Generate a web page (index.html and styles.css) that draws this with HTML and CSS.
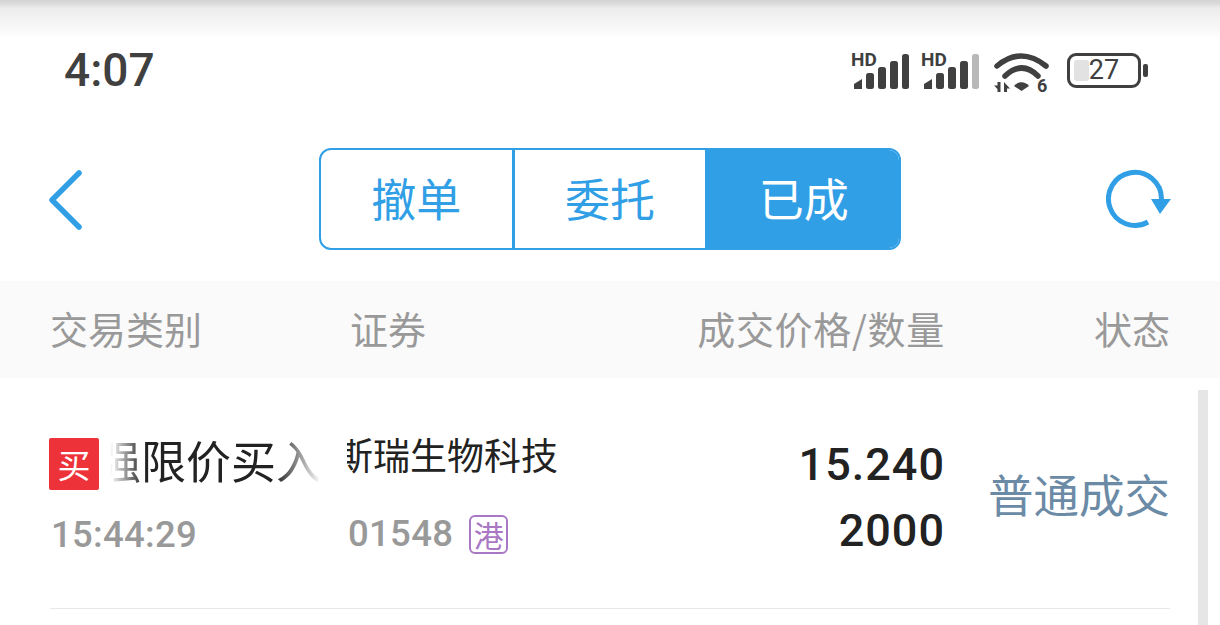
FILE: index.html
```html
<!DOCTYPE html>
<html lang="zh-CN">
<head>
  <meta charset="UTF-8">
  <title>已成</title>
  <link rel="stylesheet" href="styles.css">
</head>
<body>
  <div class="page">
    <div class="top_shade"></div>

    <!-- status bar -->
    <div class="status_bar">
      <span class="clock">4:07</span>
      <div class="status_icons">
        <svg class="icon_signal" width="60" height="40" viewBox="0 0 60 40">
          <text x="0" y="14" class="hd_text">HD</text>
          <path d="M3 37v-5l8-5v10z" fill="#404040"/>
          <rect x="15" y="21" width="8" height="16" rx="2.500" fill="#404040"/>
          <rect x="27" y="15" width="8" height="22" rx="2.500" fill="#404040"/>
          <rect x="39" y="9" width="8" height="28" rx="2.500" fill="#404040"/>
          <rect x="51" y="2" width="7" height="35" rx="2.500" fill="#404040"/>
        </svg>
        <svg class="icon_signal" width="60" height="40" viewBox="0 0 60 40">
          <text x="0" y="14" class="hd_text">HD</text>
          <path d="M3 37v-5l8-5v10z" fill="#404040"/>
          <rect x="15" y="21" width="8" height="16" rx="2.500" fill="#404040"/>
          <rect x="27" y="15" width="8" height="22" rx="2.500" fill="#404040"/>
          <rect x="39" y="9" width="8" height="28" rx="2.500" fill="#404040"/>
          <rect x="51" y="2" width="7" height="35" rx="2.500" fill="#b8b8b8"/>
        </svg>
        <svg class="icon_wifi" width="56" height="42" viewBox="0 0 56 42">
          <path d="M3 14Q27 -6 52 14" fill="none" stroke="#404040" stroke-width="5.500" stroke-linecap="round"/>
          <path d="M11 24Q28 8 44 24" fill="none" stroke="#404040" stroke-width="5.500" stroke-linecap="round"/>
          <path d="M20 34C24 29 31 29 35 34L27.500 39z" fill="#404040"/>
          <path d="M3.500 30h3v10h-3v-3L0 33.500h3.500zM10 30l6 6.500h-3v3.500h-3z" fill="#404040"/>
          <text x="43" y="40" class="wifi_six">6</text>
        </svg>
        <div class="battery">
          <div class="battery_body">
            <span class="battery_fill"></span>
            <span class="battery_num">27</span>
          </div>
          <span class="battery_cap"></span>
        </div>
      </div>
    </div>

    <!-- nav -->
    <div class="nav_bar">
      <svg width="66" height="62" viewBox="0 0 66 62">
        <path d="M31 5L4 32l27 27" fill="none" stroke="#319fe6" stroke-width="5.500" stroke-linecap="round" stroke-linejoin="round"/>
      </svg>
      <div class="tabs">
        <div class="tab">撤单</div>
        <div class="tab">委托</div>
        <div class="tab tab_on">已成</div>
      </div>
      <svg width="66" height="62" viewBox="0 0 66 62">
        <path d="M42 54A26.500 26.500 0 1 1 55.500 31" fill="none" stroke="#319fe6" stroke-width="5"/>
        <path d="M45 31h20L54 46z" fill="#319fe6"/>
      </svg>
    </div>

    <!-- table head -->
    <div class="table_row table_head">
      <div>交易类别</div>
      <div>证券</div>
      <div class="cell_right head_price">成交价格/数量</div>
      <div class="cell_right">状态</div>
    </div>

    <!-- list -->
    <div class="table_row order_row">
      <div class="cell_type">
        <div class="type_line">
          <span class="badge_buy">买</span>
          <div class="marquee marquee_type"><span>增强限价买入</span></div>
        </div>
        <div class="sub_text">15:44:29</div>
      </div>
      <div class="cell_name">
        <div class="marquee marquee_name"><span>金斯瑞生物科技</span></div>
        <div class="code_line">
          <span class="sub_text">01548</span>
          <span class="badge_hk">港</span>
        </div>
      </div>
      <div class="cell_price">
        <div>15.240</div>
        <div>2000</div>
      </div>
      <div class="cell_state">普通成交</div>
    </div>
    <div class="row_line"></div>

    <div class="scroll_thumb"></div>
  </div>
</body>
</html>
```

FILE: styles.css
```css
* {
  box-sizing: border-box;
}
body {
  margin: 0;
  background: #fff;
  font-family: "Noto Sans CJK SC", "Noto Sans", sans-serif;
}
.page {
  position: relative;
  width: 1220px;
  height: 625px;
  overflow: hidden;
}

.top_shade {
  height: 38px;
  background: linear-gradient(#d4d4d4 0, #d9d9d9 3px, #ececec 8px, #fafafa 32px, #fff 38px);
}

/* status bar */
.status_bar {
  display: flex;
  justify-content: space-between;
  align-items: center;
  height: 64px;
  padding: 0 72px 0 64px;
}
.clock {
  font-family: Roboto, sans-serif;
  font-size: 46px;
  font-weight: 500;
  color: #404040;
}
.status_icons {
  display: flex;
  align-items: center;
  gap: 10px;
}
.status_icons svg {
  overflow: visible;
}
.icon_signal {
  margin-top: 4px;
}
.icon_signal + .icon_signal {
  margin-right: 3px;
}
.icon_wifi {
  margin-top: 6px;
}
.hd_text {
  font-family: Roboto, sans-serif;
  font-size: 19px;
  font-weight: 700;
  fill: #404040;
}
.wifi_six {
  font-family: Roboto, sans-serif;
  font-size: 18px;
  font-weight: 700;
  fill: #404040;
}
.battery {
  display: flex;
  align-items: center;
  gap: 2px;
  margin-left: 7px;
}
.battery_body {
  position: relative;
  display: flex;
  align-items: center;
  justify-content: center;
  width: 74px;
  height: 35px;
  border: 3px solid #404040;
  border-radius: 9px;
}
.battery_fill {
  position: absolute;
  left: 4px;
  top: 4px;
  bottom: 4px;
  width: 15px;
  background: #e2e2e2;
  border-radius: 3px;
}
.battery_num {
  position: relative;
  font-family: Roboto, sans-serif;
  font-size: 27px;
  color: #404040;
}
.battery_cap {
  width: 5px;
  height: 13px;
  background: #404040;
  border-radius: 2px;
}

/* nav */
.nav_bar {
  display: flex;
  justify-content: space-between;
  align-items: center;
  height: 102px;
  margin-top: 46px;
  padding: 0 48px;
}
.tabs {
  display: flex;
  width: 582px;
  height: 102px;
  border: 2px solid #319fe6;
  border-radius: 12px;
  overflow: hidden;
}
.tab {
  flex: 1;
  display: flex;
  align-items: center;
  justify-content: center;
  padding-bottom: 3px;
  font-size: 45px;
  color: #319fe6;
  border-right: 3px solid #319fe6;
}
.tab_on {
  color: #fff;
  background: #319fe6;
  border-right: 0;
}

/* table */
.table_row {
  display: grid;
  grid-template-columns: 300px 1fr 300px 225px;
  padding: 0 50px;
}
.table_head {
  align-items: center;
  height: 97px;
  margin-top: 31px;
  padding-bottom: 4px;
  background: #fafafa;
  font-size: 38px;
  color: #999;
}
.cell_right {
  text-align: right;
}
.head_price {
  letter-spacing: 0.7px;
}

.order_row {
  height: 230px;
  padding-top: 59px;
}
.type_line {
  display: flex;
  align-items: center;
  height: 54px;
  margin-left: -1px;
}
.badge_buy {
  flex: none;
  width: 50px;
  height: 52px;
  display: flex;
  align-items: center;
  justify-content: center;
  background: #ee3239;
  border-radius: 2px;
  font-size: 33px;
  color: #fff;
}
.marquee {
  display: flex;
  justify-content: flex-end;
  overflow: hidden;
  white-space: nowrap;
  color: #222;
}
.marquee span {
  flex: none;
}
.marquee_type {
  width: 211px;
  margin-left: 11px;
  margin-bottom: 8px;
  font-size: 45px;
  line-height: 54px;
  -webkit-mask-image: linear-gradient(90deg, transparent 0, #000 34px, #000 165px, transparent 100%);
  mask-image: linear-gradient(90deg, transparent 0, #000 34px, #000 165px, transparent 100%);
}
.marquee_name {
  width: 211px;
  margin-top: -5px;
  margin-left: -3px;
  font-size: 37px;
  line-height: 44px;
}
.sub_text {
  font-family: Roboto, sans-serif;
  font-size: 36.5px;
  font-weight: 500;
  line-height: 44px;
  color: #999;
  letter-spacing: 0.3px;
}
.cell_type .sub_text {
  margin-top: 22px;
  margin-left: 1px;
}
.code_line {
  display: flex;
  align-items: center;
  gap: 16px;
  margin-top: 36px;
  margin-left: -2px;
}
.badge_hk {
  display: flex;
  align-items: center;
  justify-content: center;
  width: 39px;
  height: 39px;
  border: 2px solid #a878c4;
  border-radius: 6px;
  font-size: 30px;
  color: #a878c4;
}
.cell_price {
  margin-top: -5px;
  text-align: right;
  font-family: Roboto, sans-serif;
  font-size: 45px;
  font-weight: 500;
  line-height: 66px;
  color: #222;
  letter-spacing: 1px;
}
.cell_state {
  text-align: right;
  font-size: 45.5px;
  line-height: 112px;
  color: #6b8aa5;
}
.row_line {
  height: 1px;
  margin: 0 50px;
  background: #e8e8e8;
}

.scroll_thumb {
  position: absolute;
  left: 1198px;
  top: 390px;
  bottom: 0;
  width: 10px;
  background: #e6e6e6;
}
```
